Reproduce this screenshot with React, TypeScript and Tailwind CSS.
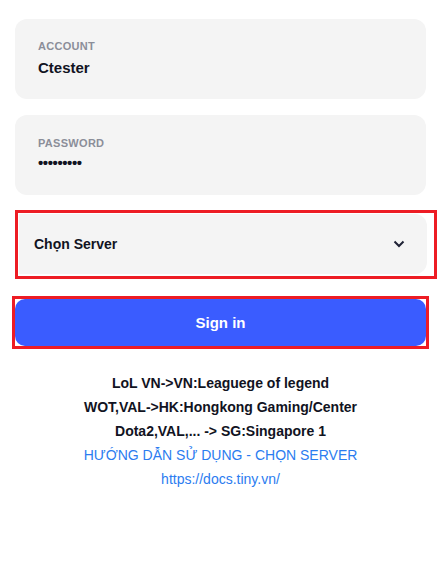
import React from "react";

export default function App() {
  return (
    <div
      className="w-[448px] h-[568px] bg-white overflow-hidden"
      style={{ fontFamily: '"Liberation Sans", Arial, sans-serif' }}
    >
      <div className="pl-[15px] pt-[19px] w-[426px]">
        <div className="h-[80px] rounded-[12px] bg-[#f4f4f4] pl-[23px] pt-[19px]">
          <div className="text-[11px] leading-[16px] font-bold tracking-[0.3px] text-[#8b8e99]">ACCOUNT</div>
          <div className="mt-[4px] text-[15px] leading-[20px] font-bold text-[#111322]">Ctester</div>
        </div>
        <div className="mt-[16px] h-[80px] rounded-[12px] bg-[#f4f4f4] pl-[23px] pt-[20px]">
          <div className="text-[11px] leading-[16px] font-bold tracking-[0.3px] text-[#8b8e99]">PASSWORD</div>
          <div className="mt-[2px] text-[15px] leading-[20px] font-bold text-[#111322] tracking-[-0.4px]">•••••••••</div>
        </div>
      </div>
      <div className="ml-[15px] mt-[15px] w-[422px] h-[69px] border-[3px] border-[#ed1c24] pl-px pt-px pr-[7px] pb-[2px]">
        <div className="h-full bg-[#f4f4f4] rounded-r-[12px] flex items-center justify-between pl-[15px] pr-[22px]">
          <span className="text-[14px] font-bold text-[#111322]">Chọn Server</span>
          <svg width="12" height="8" viewBox="0 0 12 8" fill="none">
            <path d="M1.5 1.5L6 6L10.5 1.5" stroke="#1f2235" strokeWidth="2" />
          </svg>
        </div>
      </div>
      <div className="ml-[12px] mt-[17px] w-[417px] h-[53px] border-[3px] border-[#ed1c24]">
        <div className="h-full rounded-[10px] bg-[#3a5cff] flex items-center justify-center pt-px">
          <span className="text-[15px] font-bold text-white">Sign in</span>
        </div>
      </div>
      <div className="ml-[15px] w-[411px] mt-[22px] text-center text-[14px] leading-[24px]">
        <div className="font-bold text-[#111322]">LoL VN-&gt;VN:Leaguege of legend</div>
        <div className="font-bold text-[#111322]">WOT,VAL-&gt;HK:Hongkong Gaming/Center</div>
        <div className="font-bold text-[#111322]">Dota2,VAL,... -&gt; SG:Singapore 1</div>
        <div className="text-[#2b7cf0]">HƯỚNG DẪN SỬ DỤNG - CHỌN SERVER</div>
        <div className="text-[#2b7cf0]">https://docs.tiny.vn/</div>
      </div>
    </div>
  );
}
